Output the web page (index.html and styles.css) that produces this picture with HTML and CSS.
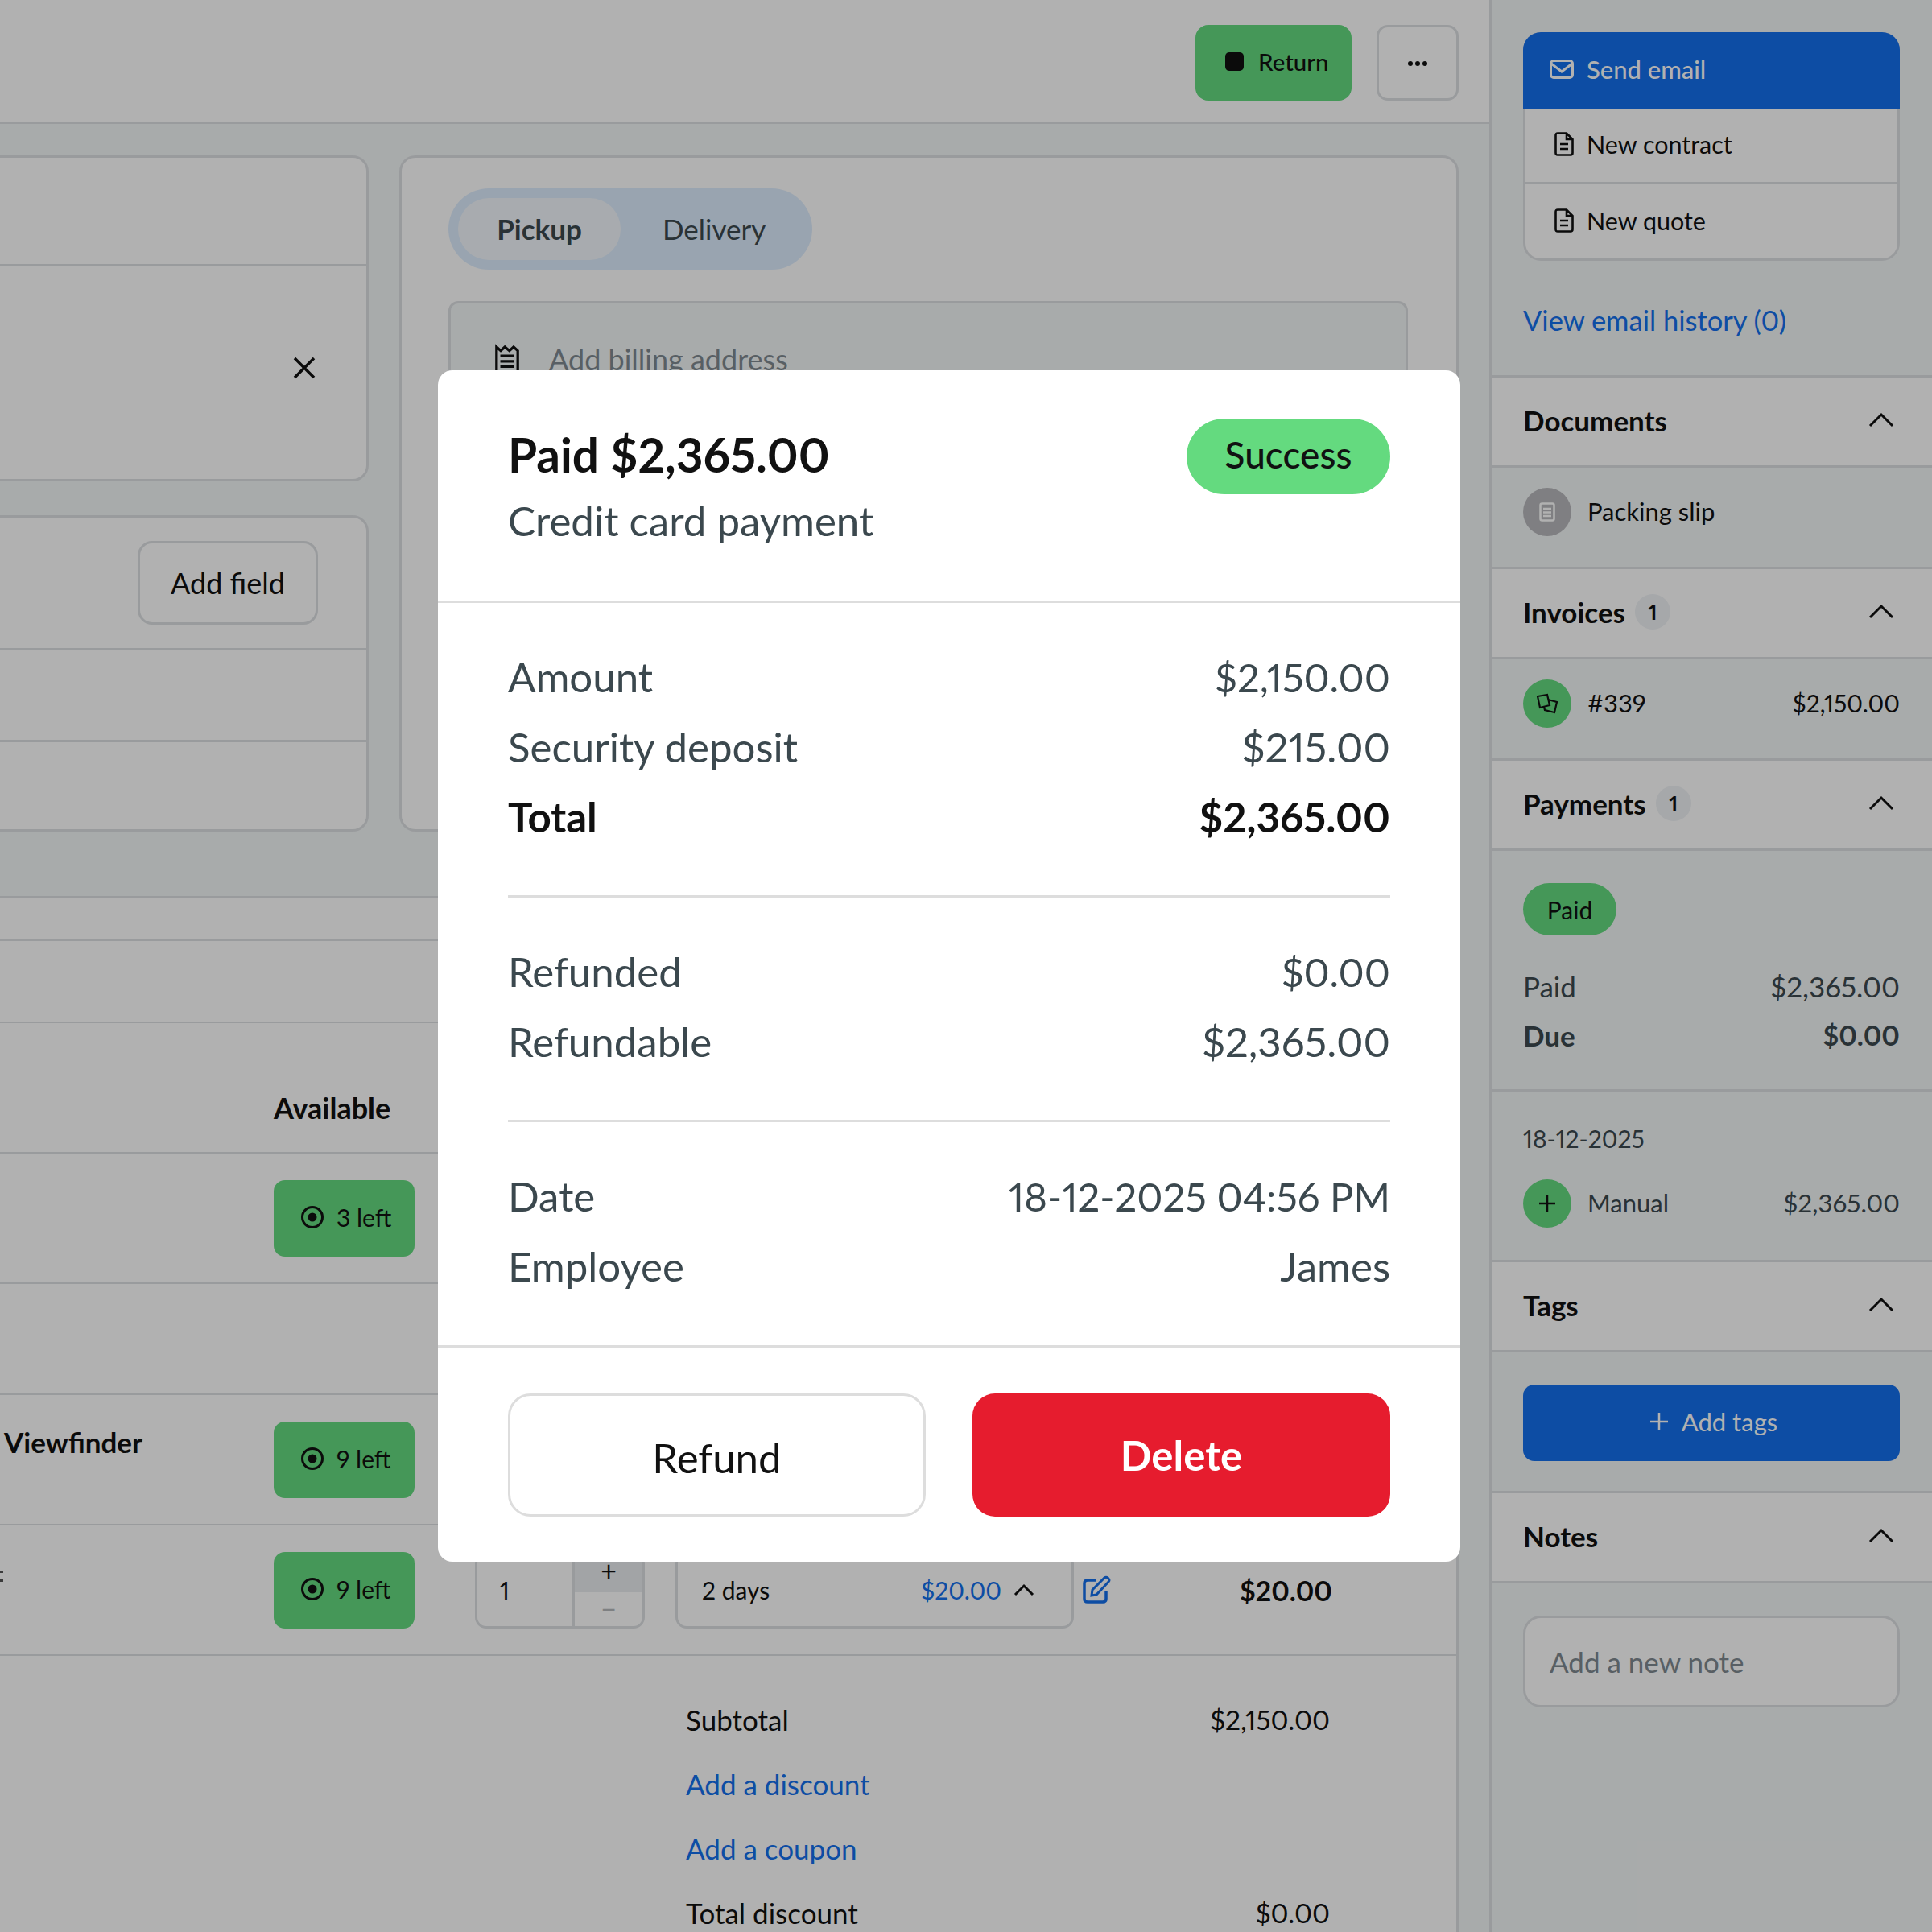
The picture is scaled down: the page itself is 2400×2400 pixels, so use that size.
FILE: index.html
```html
<!DOCTYPE html>
<html>
<head>
    <meta charset="UTF-8">
    <link rel="stylesheet" href="styles.css">
</head>
<body>
    <div class="app">
        <div class="main">
            <div class="topbar">
                <button class="btn-return"><span class="stop"></span>Return</button>
                <button class="btn-more">
                    <svg width="26" height="8" viewBox="0 0 26 8"><circle cx="4" cy="4" r="3" fill="#111"/><circle cx="13" cy="4" r="3" fill="#111"/><circle cx="22" cy="4" r="3" fill="#111"/></svg>
                </button>
            </div>

            <div class="cards">
                <div class="left-col">
                    <div class="card card-customer">
                        <div class="card-top"></div>
                        <div class="card-clear">
                            <svg width="30" height="30" viewBox="0 0 30 30"><path d="M3 3 L27 27 M27 3 L3 27" stroke="#111" stroke-width="3.5" fill="none"/></svg>
                        </div>
                    </div>
                    <div class="card card-fields">
                        <div class="field-head"><button class="btn-field">Add field</button></div>
                        <div class="field-row"></div>
                        <div class="field-row"></div>
                    </div>
                </div>
                <div class="card card-address">
                    <div class="toggle">
                        <div class="toggle-on">Pickup</div>
                        <div class="toggle-off">Delivery</div>
                    </div>
                    <div class="billing">
                        <svg width="32" height="38" viewBox="0 0 34 38"><path d="M3 36 V3 L8.5 8 L14 3 L20 8 L25.5 3 L31 8 V36 Z" stroke="#111" stroke-width="3.5" fill="none"/><path d="M8 15 H26 M8 22 H26 M8 29 H26" stroke="#111" stroke-width="3.5"/></svg>
                        <span>Add billing address</span>
                    </div>
                </div>
            </div>

            <div class="lines">
                <div class="line line-a"></div>
                <div class="line line-b"></div>
                <div class="line line-head">
                    <div class="col-name"></div>
                    <div class="col-stock">Available</div>
                </div>
                <div class="line line-item">
                    <div class="col-name"></div>
                    <div class="badge"><svg class="target" viewBox="0 0 30 30"><circle cx="15" cy="15" r="12.5" stroke="#111" stroke-width="3" fill="none"/><circle cx="15" cy="15" r="5.5" fill="#111"/></svg>3 left</div>
                </div>
                <div class="line line-short"></div>
                <div class="line line-item">
                    <div class="col-name col-title">Viewfinder</div>
                    <div class="badge"><svg class="target" viewBox="0 0 30 30"><circle cx="15" cy="15" r="12.5" stroke="#111" stroke-width="3" fill="none"/><circle cx="15" cy="15" r="5.5" fill="#111"/></svg>9 left</div>
                </div>
                <div class="line line-item">
                    <div class="col-name"><span class="sliver"></span></div>
                    <div class="badge"><svg class="target" viewBox="0 0 30 30"><circle cx="15" cy="15" r="12.5" stroke="#111" stroke-width="3" fill="none"/><circle cx="15" cy="15" r="5.5" fill="#111"/></svg>9 left</div>
                    <div class="stepper">
                        <div class="qty">1</div>
                        <div class="qty-btns">
                            <div class="qty-plus">+</div>
                            <div class="qty-minus">&minus;</div>
                        </div>
                    </div>
                    <div class="period">
                        <span>2 days</span>
                        <span class="period-price">$20.00</span>
                        <svg width="26" height="16" viewBox="0 0 26 16"><path d="M2 14 L13 3 L24 14" stroke="#111" stroke-width="3" fill="none"/></svg>
                    </div>
                    <svg class="edit" width="36" height="36" viewBox="0 0 36 36"><path d="M17 6 H7 Q3 6 3 10 V29 Q3 33 7 33 H26 Q30 33 30 29 V19" stroke="#146fec" stroke-width="3.5" fill="none"/><path d="M12 25 L13 18 L28 3 Q30 1.500 32 3 L33 4 Q35 6 33 8 L18 24 Z" stroke="#146fec" stroke-width="3" fill="none"/></svg>
                    <div class="line-total">$20.00</div>
                </div>
                <div class="totals">
                    <div class="total-row"><span>Subtotal</span><span class="total-val">$2,150.00</span></div>
                    <div class="total-row link">Add a discount</div>
                    <div class="total-row link">Add a coupon</div>
                    <div class="total-row"><span>Total discount</span><span class="total-val">$0.00</span></div>
                </div>
            </div>
        </div>

        <div class="side">
            <div class="side-top">
                <div class="actions">
                    <div class="action action-primary">
                        <svg width="30" height="24" viewBox="0 0 30 24"><rect x="1.500" y="1.500" width="27" height="21" rx="3.500" stroke="currentColor" stroke-width="3" fill="none"/><path d="M2 5 L15 15 L28 5" stroke="currentColor" stroke-width="3" fill="none"/></svg>
                        Send email
                    </div>
                    <div class="action">
                        <svg class="doc" width="24" height="30" viewBox="0 0 24 30"><path d="M4 1.500 H15 L22.500 9 V26 Q22.500 28.500 20 28.500 H4 Q1.500 28.500 1.500 26 V4 Q1.500 1.500 4 1.500 Z M15 1.500 V9 H22.500" stroke="#111" stroke-width="2.600" fill="none"/><path d="M7 15 H17 M7 21 H17" stroke="#111" stroke-width="2.600"/></svg>
                        New contract
                    </div>
                    <div class="action">
                        <svg class="doc" width="24" height="30" viewBox="0 0 24 30"><path d="M4 1.500 H15 L22.500 9 V26 Q22.500 28.500 20 28.500 H4 Q1.500 28.500 1.500 26 V4 Q1.500 1.500 4 1.500 Z M15 1.500 V9 H22.500" stroke="#111" stroke-width="2.600" fill="none"/><path d="M7 15 H17 M7 21 H17" stroke="#111" stroke-width="2.600"/></svg>
                        New quote
                    </div>
                </div>
                <div class="history">View email history (0)</div>
            </div>

            <div class="sec-head"><div class="sec-title">Documents</div><svg class="chev" width="32" height="20" viewBox="0 0 32 20"><path d="M2 17 L16 3 L30 17" stroke="#111" stroke-width="3" fill="none"/></svg></div>
            <div class="sec-body">
                <div class="icon-circle icon-gray">
                    <svg width="20" height="24" viewBox="0 0 20 24"><rect x="1.500" y="1.500" width="17" height="21" rx="2" stroke="#fff" stroke-width="2.500" fill="none"/><path d="M5 8 H15 M5 12.500 H15 M5 17 H15" stroke="#fff" stroke-width="2.500"/></svg>
                </div>
                <span class="sec-label">Packing slip</span>
            </div>

            <div class="sec-head"><div class="sec-title">Invoices<span class="count">1</span></div><svg class="chev" width="32" height="20" viewBox="0 0 32 20"><path d="M2 17 L16 3 L30 17" stroke="#111" stroke-width="3" fill="none"/></svg></div>
            <div class="sec-body">
                <div class="icon-circle icon-green">
                    <svg width="28" height="26" viewBox="0 0 28 26"><path d="M2 4 L14 2 L17 15 L5 18 Z" stroke="#111" stroke-width="2.200" fill="none"/><path d="M15 8 L26 11 L23 24 L11 21 L10 17" stroke="#111" stroke-width="2.200" fill="none"/></svg>
                </div>
                <span class="sec-label">#339</span>
                <span class="sec-amount sec-amount-tight">$2,150.00</span>
            </div>

            <div class="sec-head"><div class="sec-title">Payments<span class="count">1</span></div><svg class="chev" width="32" height="20" viewBox="0 0 32 20"><path d="M2 17 L16 3 L30 17" stroke="#111" stroke-width="3" fill="none"/></svg></div>
            <div class="pay-body">
                <div class="pay-pill">Paid</div>
                <div class="pay-row"><span>Paid</span><span>$2,365.00</span></div>
                <div class="pay-row pay-due"><span>Due</span><span class="pay-due-val">$0.00</span></div>
            </div>
            <div class="pay-list">
                <div class="pay-date">18-12-2025</div>
                <div class="pay-item">
                    <div class="icon-circle icon-green">
                        <svg width="24" height="24" viewBox="0 0 24 24"><path d="M12 2 V22 M2 12 H22" stroke="#111" stroke-width="2.500"/></svg>
                    </div>
                    <span class="sec-label">Manual</span>
                    <span class="sec-amount">$2,365.00</span>
                </div>
            </div>

            <div class="sec-head"><div class="sec-title">Tags</div><svg class="chev" width="32" height="20" viewBox="0 0 32 20"><path d="M2 17 L16 3 L30 17" stroke="#111" stroke-width="3" fill="none"/></svg></div>
            <div class="tags-body">
                <div class="btn-tags">
                    <svg width="24" height="24" viewBox="0 0 24 24"><path d="M12 1 V23 M1 12 H23" stroke="currentColor" stroke-width="2.500"/></svg>
                    Add tags
                </div>
            </div>

            <div class="sec-head"><div class="sec-title">Notes</div><svg class="chev" width="32" height="20" viewBox="0 0 32 20"><path d="M2 17 L16 3 L30 17" stroke="#111" stroke-width="3" fill="none"/></svg></div>
            <div class="notes-body">
                <div class="note-input">Add a new note</div>
            </div>
        </div>
    </div>

    <div class="backdrop"></div>

    <div class="modal">
        <div class="modal-head">
            <div>
                <div class="modal-title">Paid $2,365.00</div>
                <div class="modal-sub">Credit card payment</div>
            </div>
            <div class="status">Success</div>
        </div>
        <div class="modal-body">
            <div class="group">
                <div class="row"><span>Amount</span><span class="val-tight">$2,150.00</span></div>
                <div class="row"><span>Security deposit</span><span>$215.00</span></div>
                <div class="row row-total"><span>Total</span><span>$2,365.00</span></div>
            </div>
            <div class="group">
                <div class="row"><span>Refunded</span><span class="val-tight">$0.00</span></div>
                <div class="row"><span>Refundable</span><span>$2,365.00</span></div>
            </div>
            <div class="group group-last">
                <div class="row"><span>Date</span><span class="val-tight">18-12-2025 04:56 PM</span></div>
                <div class="row"><span>Employee</span><span>James</span></div>
            </div>
        </div>
        <div class="modal-foot">
            <button class="btn-refund">Refund</button>
            <button class="btn-delete">Delete</button>
        </div>
    </div>
</body>
</html>
```

FILE: styles.css
```css
* {
    box-sizing: border-box;
}
html, body {
    margin: 0;
    height: 2400px;
    overflow: hidden;
}
body {
    position: relative;
    font-family: "Lato", "Liberation Sans", sans-serif;
    font-variant-numeric: proportional-nums;
    color: #111;
    background: #f3f6f7;
}
button {
    font-family: inherit;
    font-variant-numeric: inherit;
    cursor: pointer;
}
.app {
    display: flex;
    height: 2400px;
}

/* main column */
.main {
    width: 1850px;
    overflow: hidden;
}
.topbar {
    height: 154px;
    padding: 31px 38px 0 0;
    display: flex;
    justify-content: flex-end;
    align-items: flex-start;
    gap: 31px;
    background: #fff;
    border-bottom: 3px solid #dde0e3;
}
.btn-return {
    width: 194px;
    height: 94px;
    padding: 0 0 4px 37px;
    display: flex;
    align-items: center;
    gap: 18px;
    border: none;
    border-radius: 16px;
    background: #64da7f;
    font-size: 29.500px;
    font-weight: 500;
    color: #111;
}
.stop {
    width: 23px;
    height: 23px;
    border-radius: 5px;
    background: #111;
}
.btn-more {
    width: 102px;
    height: 94px;
    border: 3px solid #dde0e3;
    border-radius: 14px;
    background: #fff;
}

.cards {
    display: flex;
    gap: 38px;
    padding: 39px 38px 0 0;
}
.left-col {
    width: 458px;
    display: flex;
    flex-direction: column;
    gap: 42px;
}
.card {
    background: #fff;
    border: 3px solid #dde0e3;
    border-radius: 20px;
}
.card-customer {
    height: 405px;
    margin-left: -20px;
}
.card-top {
    height: 135px;
    border-bottom: 3px solid #dde0e3;
}
.card-clear {
    display: flex;
    justify-content: flex-end;
    padding: 111px 62px 0 0;
}
.card-fields {
    height: 393px;
    margin-left: -20px;
}
.field-head {
    height: 165px;
    display: flex;
    justify-content: flex-end;
    padding: 29px 60px 0 0;
    border-bottom: 3px solid #dde0e3;
}
.field-row {
    height: 114px;
    border-bottom: 3px solid #dde0e3;
}
.field-row:last-child {
    border-bottom: none;
}
.btn-field {
    width: 224px;
    height: 104px;
    border: 3px solid #dde0e3;
    border-radius: 18px;
    background: #fff;
    font-size: 36px;
    color: #111;
}
.card-address {
    flex: 1;
    height: 840px;
    padding: 38px 60px 0 58px;
}
.toggle {
    width: 452px;
    height: 101px;
    padding: 12px 0 12px 12px;
    display: flex;
    align-items: center;
    border-radius: 51px;
    background: #ddedfe;
    font-size: 35px;
}
.toggle-on {
    width: 202px;
    height: 77px;
    padding-bottom: 2px;
    display: flex;
    align-items: center;
    justify-content: center;
    border-radius: 39px;
    background: #f3f7fc;
    font-weight: 700;
    color: #3b484e;
}
.toggle-off {
    flex: 1;
    padding: 0 0 2px 52px;
    color: #3b484e;
}
.billing {
    height: 144px;
    margin-top: 39px;
    padding: 0 54px;
    display: flex;
    align-items: center;
    gap: 36px;
    background: #f3f6f7;
    border: 3px solid #dde0e3;
    border-radius: 12px;
    font-size: 36px;
    color: #7f8a90;
}

.lines {
    width: 1812px;
    height: 1290px;
    margin-top: 80px;
    background: #fff;
    border-top: 3px solid #dde0e3;
    border-right: 3px solid #dde0e3;
}
.line {
    display: flex;
    align-items: center;
    border-bottom: 2px solid #dde0e3;
}
.line-a {
    height: 53px;
}
.line-b {
    height: 102px;
}
.line-head {
    height: 162px;
    padding-top: 50px;
    font-size: 36px;
    font-weight: 700;
}
.line-item {
    height: 162px;
}
.line-short {
    height: 138px;
}
.col-name {
    width: 340px;
    flex: none;
}
.col-title {
    align-self: flex-start;
    padding: 37px 0 0 5px;
    font-size: 35px;
    font-weight: 700;
}
.sliver {
    display: block;
    width: 4px;
    height: 14px;
    margin-top: -24px;
    border-top: 3px solid #555;
    border-bottom: 3px solid #555;
}
.badge {
    width: 175px;
    height: 95px;
    padding: 0 0 2px 33px;
    display: flex;
    align-items: center;
    gap: 15px;
    border-radius: 14px;
    background: #64da7f;
    font-size: 30px;
    color: #111;
}
.target {
    width: 30px;
    height: 30px;
}
.stepper {
    width: 211px;
    height: 95px;
    margin-left: 75px;
    display: flex;
    border: 3px solid #dde0e3;
    border-radius: 14px;
    overflow: hidden;
    font-size: 30px;
}
.qty {
    width: 118px;
    padding: 26px 0 0 28px;
}
.qty-btns {
    flex: 1;
    border-left: 3px solid #dde0e3;
    text-align: center;
    font-size: 34px;
}
.qty-plus {
    height: 47px;
    line-height: 40px;
    background: #eaedf0;
}
.qty-minus {
    height: 45px;
    color: #b6b9bc;
}
.period {
    width: 495px;
    height: 95px;
    margin-left: 38px;
    padding: 0 46px 0 30px;
    display: flex;
    align-items: center;
    border: 3px solid #dde0e3;
    border-radius: 14px;
    font-size: 30px;
}
.period-price {
    margin-left: auto;
    margin-right: 15px;
    color: #146fec;
}
.edit {
    margin-left: 10px;
}
.line-total {
    margin-left: auto;
    padding-right: 154px;
    font-size: 34px;
    font-weight: 700;
}
.totals {
    width: 800px;
    margin-left: 852px;
    padding-top: 39px;
    font-size: 35px;
}
.total-row {
    height: 80px;
    display: flex;
    justify-content: space-between;
    align-items: center;
}
.total-val {
    font-size: 33.500px;
}
.link {
    color: #146fec;
}

/* sidebar */
.side {
    flex: 1;
    border-left: 3px solid #dde0e3;
}
.side-top {
    height: 466px;
    padding: 40px 40px 0 39px;
}
.actions {
    height: 284px;
    background: #fff;
    border: 3px solid #dde0e3;
    border-radius: 22px;
    font-size: 30.500px;
}
.action {
    height: 94px;
    padding: 0 0 4px 38px;
    display: flex;
    align-items: center;
    gap: 16px;
    border-bottom: 3px solid #dde0e3;
}
.action:last-child {
    border-bottom: none;
}
.action-primary {
    height: 95px;
    margin: -3px -3px 0;
    padding: 0 0 3px 33px;
    border-bottom: none;
    border-radius: 22px 22px 0 0;
    background: #146fec;
    color: #fff;
    font-size: 31px;
    font-weight: 500;
}
.doc {
    margin-left: -2px;
}
.history {
    margin-top: 53px;
    font-size: 34.500px;
    color: #146fec;
}
.sec-head {
    height: 112px;
    padding: 0 40px 4px 39px;
    display: flex;
    justify-content: space-between;
    align-items: center;
    background: #fff;
    border-top: 3px solid #dde0e3;
}
.sec-title {
    display: flex;
    align-items: center;
    gap: 12px;
    font-size: 35px;
    font-weight: 700;
}
.count {
    width: 44px;
    height: 44px;
    display: flex;
    align-items: center;
    justify-content: center;
    border-radius: 50%;
    background: #eff2f5;
    font-size: 27px;
}
.chev {
    margin-right: 7px;
}
.sec-body {
    height: 126px;
    padding: 0 40px 14px 39px;
    display: flex;
    align-items: center;
    gap: 20px;
    border-top: 3px solid #dde0e3;
}
.icon-circle {
    width: 60px;
    height: 60px;
    flex: none;
    display: flex;
    align-items: center;
    justify-content: center;
    border-radius: 50%;
}
.icon-gray {
    background: #b7b8bb;
}
.icon-green {
    background: #64da7f;
}
.sec-label {
    padding-bottom: 2px;
    font-size: 31px;
    color: #3b484e;
}
.sec-body .sec-label {
    color: #111;
}
.sec-amount {
    margin-left: auto;
    padding-bottom: 2px;
    font-size: 31.500px;
    color: #3b484e;
}
.sec-body .sec-amount {
    color: #111;
}
.sec-amount-tight {
    font-size: 30px;
}
.pay-body {
    height: 299px;
    padding: 40px 40px 0 39px;
    border-top: 3px solid #dde0e3;
}
.pay-pill {
    width: 116px;
    height: 65px;
    display: flex;
    align-items: center;
    justify-content: center;
    border-radius: 33px;
    background: #64da7f;
    font-size: 30px;
}
.pay-row {
    height: 61px;
    display: flex;
    justify-content: space-between;
    align-items: center;
    font-size: 35px;
    color: #3b484e;
}
.pay-row:nth-child(2) {
    margin-top: 32px;
}
.pay-due {
    font-weight: 700;
}
.pay-due-val {
    font-size: 34px;
}
.pay-list {
    height: 212px;
    padding: 39px 40px 0 39px;
    border-top: 3px solid #dde0e3;
}
.pay-date {
    font-size: 30px;
    line-height: 38px;
    color: #3b484e;
}
.pay-item {
    margin-top: 32px;
    display: flex;
    align-items: center;
    gap: 20px;
}
.tags-body {
    height: 175px;
    padding: 40px 40px 0 39px;
    border-top: 3px solid #dde0e3;
}
.btn-tags {
    height: 95px;
    padding: 0 0 3px 5px;
    display: flex;
    align-items: center;
    justify-content: center;
    gap: 16px;
    border-radius: 14px;
    background: #146fec;
    font-size: 31px;
    color: #fff;
}
.notes-body {
    height: 440px;
    padding: 40px 40px 0 39px;
    border-top: 3px solid #dde0e3;
}
.note-input {
    height: 114px;
    padding: 0 30px;
    display: flex;
    align-items: center;
    background: #fff;
    border: 3px solid #dde0e3;
    border-radius: 22px;
    font-size: 35px;
    color: #7f8a90;
}

/* modal */
.backdrop {
    position: absolute;
    inset: 0;
    background: rgba(0, 0, 0, 0.305);
}
.modal {
    position: absolute;
    left: 544px;
    top: 460px;
    width: 1270px;
    height: 1480px;
    background: #fff;
    border-radius: 18px;
}
.modal-head {
    height: 289px;
    padding: 60px 87px 0;
    display: flex;
    justify-content: space-between;
    align-items: flex-start;
    border-bottom: 3px solid #ddd;
}
.modal-title {
    height: 88px;
    display: flex;
    align-items: center;
    font-size: 58.500px;
    font-weight: 700;
}
.modal-sub {
    height: 77px;
    display: flex;
    align-items: center;
    font-size: 51px;
    color: #3b484e;
}
.status {
    width: 253px;
    height: 94px;
    padding-bottom: 5px;
    display: flex;
    align-items: center;
    justify-content: center;
    border-radius: 47px;
    background: #64da7f;
    font-size: 46px;
    font-weight: 500;
}
.modal-body {
    padding: 0 87px;
}
.group {
    padding: 48px 0 54px;
    border-bottom: 3px solid #ddd;
}
.group-last {
    border-bottom: none;
    padding-bottom: 55px;
}
.row {
    height: 87px;
    display: flex;
    justify-content: space-between;
    align-items: center;
    font-size: 51px;
    color: #3b484e;
}
.row-total {
    color: #111;
    font-weight: 700;
}
.val-tight {
    font-size: 49px;
}
.modal-foot {
    height: 270px;
    padding: 57px 87px 0;
    display: flex;
    gap: 58px;
    align-items: flex-start;
    border-top: 3px solid #ddd;
}
.modal-foot button {
    width: 519px;
    flex: none;
    height: 153px;
    border-radius: 28px;
    font-size: 51px;
}
.btn-refund {
    padding-top: 6px;
    background: #fff;
    border: 3px solid #ddd;
    color: #111;
}
.btn-delete {
    background: #e61c2e;
    border: none;
    color: #fff;
    font-weight: 700;
}
```
